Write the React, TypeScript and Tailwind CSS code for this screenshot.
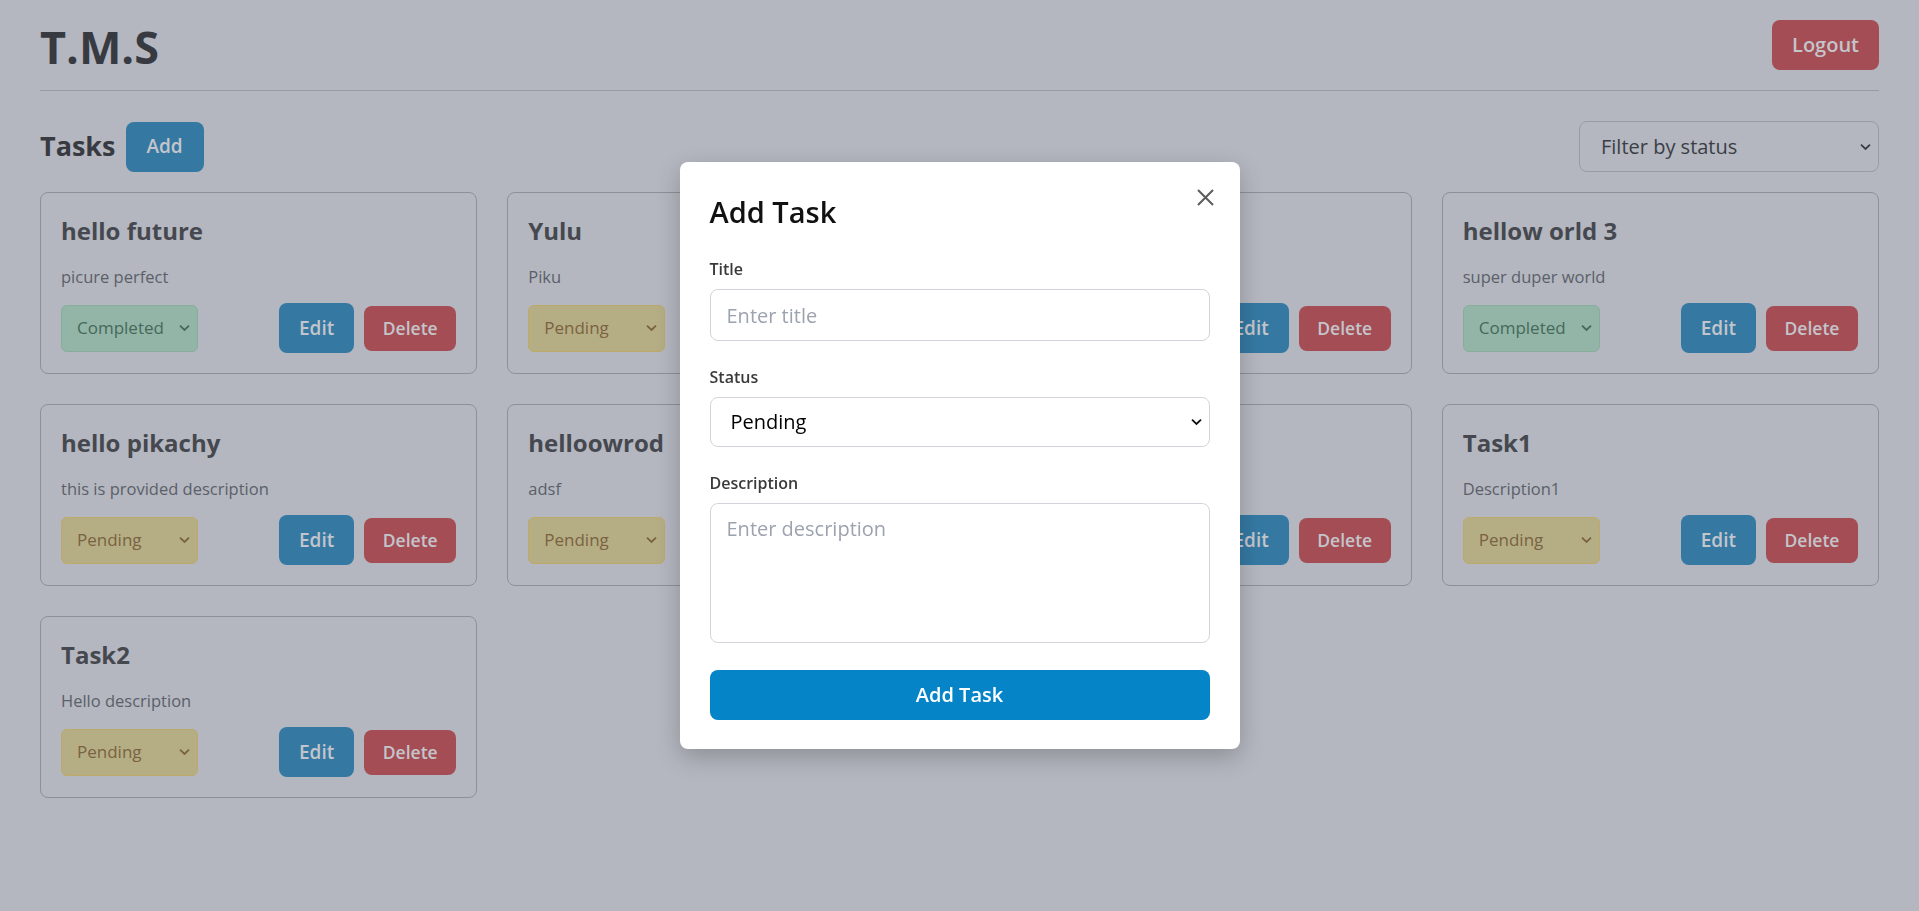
import React from "react";

type Task = { title: string; desc: string; status: "Pending" | "Completed" };

const tasks: Task[] = [
  { title: "hello future", desc: "picure perfect", status: "Completed" },
  { title: "Yulu", desc: "Piku", status: "Pending" },
  { title: "hello world 2", desc: "new world", status: "Pending" },
  { title: "hellow orld 3", desc: "super duper world", status: "Completed" },
  { title: "hello pikachy", desc: "this is provided description", status: "Pending" },
  { title: "helloowrod", desc: "adsf", status: "Pending" },
  { title: "hello", desc: "world", status: "Pending" },
  { title: "Task1", desc: "Description1", status: "Pending" },
  { title: "Task2", desc: "Hello description", status: "Pending" },
];

function Chevron({ color }: { color: string }) {
  return (
    <svg
      className="pointer-events-none absolute right-[8px] top-1/2 -translate-y-1/2"
      width="11"
      height="7"
      viewBox="0 0 11 7"
      fill="none"
    >
      <path d="M1 1.2L5.5 5.5L10 1.2" stroke={color} strokeWidth="1.8" />
    </svg>
  );
}

function TaskCard({ task }: { task: Task }) {
  const done = task.status === "Completed";
  return (
    <div className="rounded-lg border border-[#8e9098] p-5">
      <h3 className="text-[24px] font-bold leading-[36px] text-[#46484f]">{task.title}</h3>
      <p className="mt-4 text-[16.5px] leading-6 text-[#5b5f69]">{task.desc}</p>
      <div className="mt-[14px] flex items-center justify-between">
        <div className="relative">
          {done ? (
            <select
              defaultValue="Completed"
              className="h-[47px] w-[137px] appearance-none rounded-md border border-[#86ae9b] bg-[#93b5a7] pl-[15px] pr-6 text-[17px] text-[#45695a] outline-none"
            >
              <option>Pending</option>
              <option>Completed</option>
            </select>
          ) : (
            <select
              defaultValue="Pending"
              className="h-[47px] w-[137px] appearance-none rounded-md border border-[#bda96a] bg-[#b5ae84] pl-[15px] pr-6 text-[17px] text-[#7a6242] outline-none"
            >
              <option>Pending</option>
              <option>Completed</option>
            </select>
          )}
          <Chevron color={done ? "#45695a" : "#7a6242"} />
        </div>
        <div className="flex items-center gap-[10px]">
          <button className="h-[50px] rounded-lg bg-[#3579a3] px-5 text-[19px] font-semibold text-[#c3c5cb]">
            Edit
          </button>
          <button className="h-[45px] w-[92px] rounded-lg bg-[#a54d55] text-[17.5px] font-semibold text-[#c3c5cb]">
            Delete
          </button>
        </div>
      </div>
    </div>
  );
}

export default function App() {
  return (
    <div className="relative min-h-screen bg-[#b4b7bf] font-['Open_Sans',sans-serif]">
      <div className="px-10">
        <header className="flex items-center justify-between border-b border-[#9a9ca4] pb-5 pt-5">
          <h1 className="mt-[3px] text-[45px] font-bold leading-none text-[#383a42]">T.M.S</h1>
          <button className="h-[50px] rounded-lg bg-[#a54d55] px-5 text-[20px] font-semibold text-[#c3c5cb]">
            Logout
          </button>
        </header>

        <div className="mt-[30px] flex items-center justify-between">
          <div className="flex items-center gap-[10px]">
            <h2 className="text-[27px] font-bold text-[#383a42]">Tasks</h2>
            <button className="h-[50px] w-[78px] rounded-lg bg-[#3579a3] text-[19px] font-semibold text-[#c3c5cb]">
              Add
            </button>
          </div>
          <div className="relative">
            <select
              defaultValue=""
              className="h-[51px] w-[300px] appearance-none rounded-lg border border-[#9a9ca4] bg-[#b4b7bf] pl-[21px] pr-8 text-[20px] text-[#3b3e46] outline-none"
            >
              <option value="">Filter by status</option>
              <option>Pending</option>
              <option>Completed</option>
            </select>
            <Chevron color="#3b3e46" />
          </div>
        </div>

        <div className="mt-5 grid grid-cols-4 gap-[30px]">
          {tasks.map((t, i) => (
            <TaskCard key={i} task={t} />
          ))}
        </div>
      </div>

      <div className="fixed inset-0 flex items-center justify-center">
        <div className="relative w-[560px] rounded-lg bg-white px-[30px] pb-[29px] pt-[32px] shadow-[0_8px_24px_rgba(0,0,0,0.22)]">
          <button className="absolute right-[26px] top-[27px]" aria-label="Close">
            <svg width="17" height="17" viewBox="0 0 17 17" fill="none">
              <path d="M1 1L16 16M16 1L1 16" stroke="#5c5c5c" strokeWidth="2" />
            </svg>
          </button>
          <h2 className="mb-[27px] text-[29px] font-semibold leading-[36px] text-[#111]">Add Task</h2>

          <label className="mb-2 block text-[16px] font-semibold leading-6 text-[#3a3a3a]">Title</label>
          <input
            placeholder="Enter title"
            className="mb-6 block h-[52px] w-full rounded-lg border border-[#d1d5db] px-4 text-[20px] text-black outline-none placeholder:text-[#9ca3af]"
          />

          <label className="mb-2 block text-[16px] font-semibold leading-6 text-[#3a3a3a]">Status</label>
          <div className="relative mb-6">
            <select
              defaultValue="Pending"
              className="block h-[50px] w-full appearance-none rounded-lg border border-[#d1d5db] bg-white pl-5 pr-8 text-[20px] text-black outline-none"
            >
              <option>Pending</option>
              <option>Completed</option>
            </select>
            <Chevron color="#111" />
          </div>

          <label className="mb-2 block text-[16px] font-semibold leading-6 text-[#3a3a3a]">Description</label>
          <textarea
            placeholder="Enter description"
            className="mb-[27px] block h-[140px] w-full resize-none rounded-lg border border-[#d1d5db] px-4 pt-[10px] text-[20px] leading-[30px] text-black outline-none placeholder:text-[#9ca3af]"
          />

          <button className="block h-[50px] w-full rounded-lg bg-[#0584c8] text-[20px] font-semibold text-white">
            Add Task
          </button>
        </div>
      </div>
    </div>
  );
}
